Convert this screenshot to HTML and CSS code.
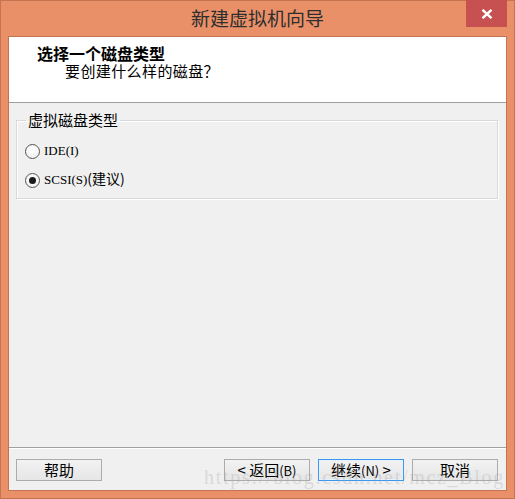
FILE: index.html
```html
<!DOCTYPE html>
<html lang="zh-CN">
<head>
<meta charset="utf-8">
<title>新建虚拟机向导</title>
<link rel="stylesheet" href="styles.css">
</head>
<body>
<div class="window">
  <div class="titlebar">
    <div class="title">新建虚拟机向导</div>
    <div class="close">
      <svg width="12" height="10" viewBox="0 0 12 10"><path d="M1.5 0.8 L10.5 9.2 M10.5 0.8 L1.5 9.2" stroke="#fff" stroke-width="2.4" fill="none"/></svg>
    </div>
  </div>
  <div class="client">
    <div class="header">
      <div class="heading">选择一个磁盘类型</div>
      <div class="subheading">要创建什么样的磁盘？</div>
    </div>
    <div class="body">
      <fieldset class="group">
        <legend>虚拟磁盘类型</legend>
        <div class="option"><span class="radio"></span><span class="lat">IDE(I)</span></div>
        <div class="option"><span class="radio checked"></span><span class="lat">SCSI(S)</span><span class="cjk">(建议)</span></div>
      </fieldset>
    </div>
    <div class="footer">
      <div class="btn">帮助</div>
      <div class="spacer"></div>
      <div class="btn">&lt; 返回<span class="acc">(B)</span></div>
      <div class="btn default">继续<span class="acc">(N)</span> &gt;</div>
      <div class="btn">取消</div>
    </div>
  </div>
  <div class="watermark">https://blog.csdn.net/mcz_Blog</div>
</div>
</body>
</html>
```
FILE: styles.css
```css
html, body {
  margin: 0;
  padding: 0;
}
body {
  font-family: "Noto Sans CJK SC", "Noto Sans", sans-serif;
  color: #000;
}
.window {
  position: relative;
  width: 515px;
  height: 499px;
  box-sizing: border-box;
  background: #ea9068;
  border: 1px solid #c6744f;
  display: flex;
  flex-direction: column;
}
.titlebar {
  height: 35px;
  display: grid;
  grid-template-columns: 1fr auto 1fr;
  align-items: start;
}
.title {
  grid-column: 2;
  font-size: 19px;
  line-height: 36px;
  color: #2e2e2e;
  margin-top: -1px;
}
.close {
  grid-column: 3;
  justify-self: end;
  margin-right: 7px;
  margin-top: -1px;
  width: 41px;
  height: 27px;
  background: #c75050;
  display: flex;
  align-items: center;
  justify-content: center;
}
.client {
  flex: 1;
  margin: 0 7px 7px 7px;
  border: 1px solid #c57350;
  background: #f0f0f0;
  display: flex;
  flex-direction: column;
}
.header {
  height: 65px;
  background: #fff;
  border-bottom: 1px solid #a0a0a0;
  box-sizing: content-box;
  padding-left: 28px;
}
.heading {
  font-size: 16px;
  font-weight: bold;
  line-height: 16px;
  margin-top: 8px;
}
.subheading {
  font-size: 15px;
  line-height: 15px;
  margin-top: 2px;
  padding-left: 28px;
  letter-spacing: 0.4px;
}
.body {
  flex: 1;
  padding: 9px 8px 0 7px;
}
.group {
  margin: 0;
  padding: 0 0 0 8px;
  height: 87px;
  box-sizing: border-box;
  border: 1px solid #d9d9d9;
  box-shadow: 1px 1px 0 #fff, inset 1px 1px 0 #fff;
  min-width: 0;
}
.group legend {
  margin-left: 1px;
  padding: 0 2px 0 2px;
  font-size: 15px;
  line-height: 16px;
  color: #000;
}
.option {
  display: flex;
  align-items: center;
  height: 16px;
  margin-top: 15px;
}
.option + .option {
  margin-top: 13px;
}
.radio {
  width: 13px;
  height: 13px;
  border: 1px solid #555;
  border-radius: 50%;
  background: radial-gradient(circle at 50% 40%, #ffffff 0%, #f4f4f4 70%, #e6e6e6 100%);
  margin-right: 4px;
  position: relative;
  flex: none;
}
.radio.checked::after {
  content: "";
  position: absolute;
  left: 3px;
  top: 3px;
  width: 7px;
  height: 7px;
  border-radius: 50%;
  background: #1a1a1a;
}
.lat {
  font-family: "Liberation Serif", serif;
  font-size: 13px;
  line-height: 16px;
}
.cjk {
  font-size: 14px;
  line-height: 16px;
  margin-top: -4px;
}
.footer {
  border-top: 1px solid #a0a0a0;
  box-shadow: inset 0 1px 0 #fff;
  padding: 11px 8px 9px 7px;
  display: flex;
  gap: 8px;
}
.spacer {
  flex: 1;
}
.btn {
  width: 86px;
  height: 22px;
  box-sizing: border-box;
  border: 1px solid #acacac;
  background: linear-gradient(#f2f2f2, #e6e6e6);
  font-size: 15px;
  line-height: 20px;
  text-align: center;
  white-space: nowrap;
}
.btn.default {
  border-color: #3c97f0;
  box-shadow: inset 0 0 0 1px #e5f1fb;
}
.acc {
  font-size: 13px;
}
.watermark {
  position: absolute;
  left: 203px;
  top: 465px;
  font-family: "Liberation Serif", serif;
  font-size: 20px;
  letter-spacing: 1.7px;
  color: rgba(160, 160, 160, 0.3);
  white-space: nowrap;
  pointer-events: none;
}
```
